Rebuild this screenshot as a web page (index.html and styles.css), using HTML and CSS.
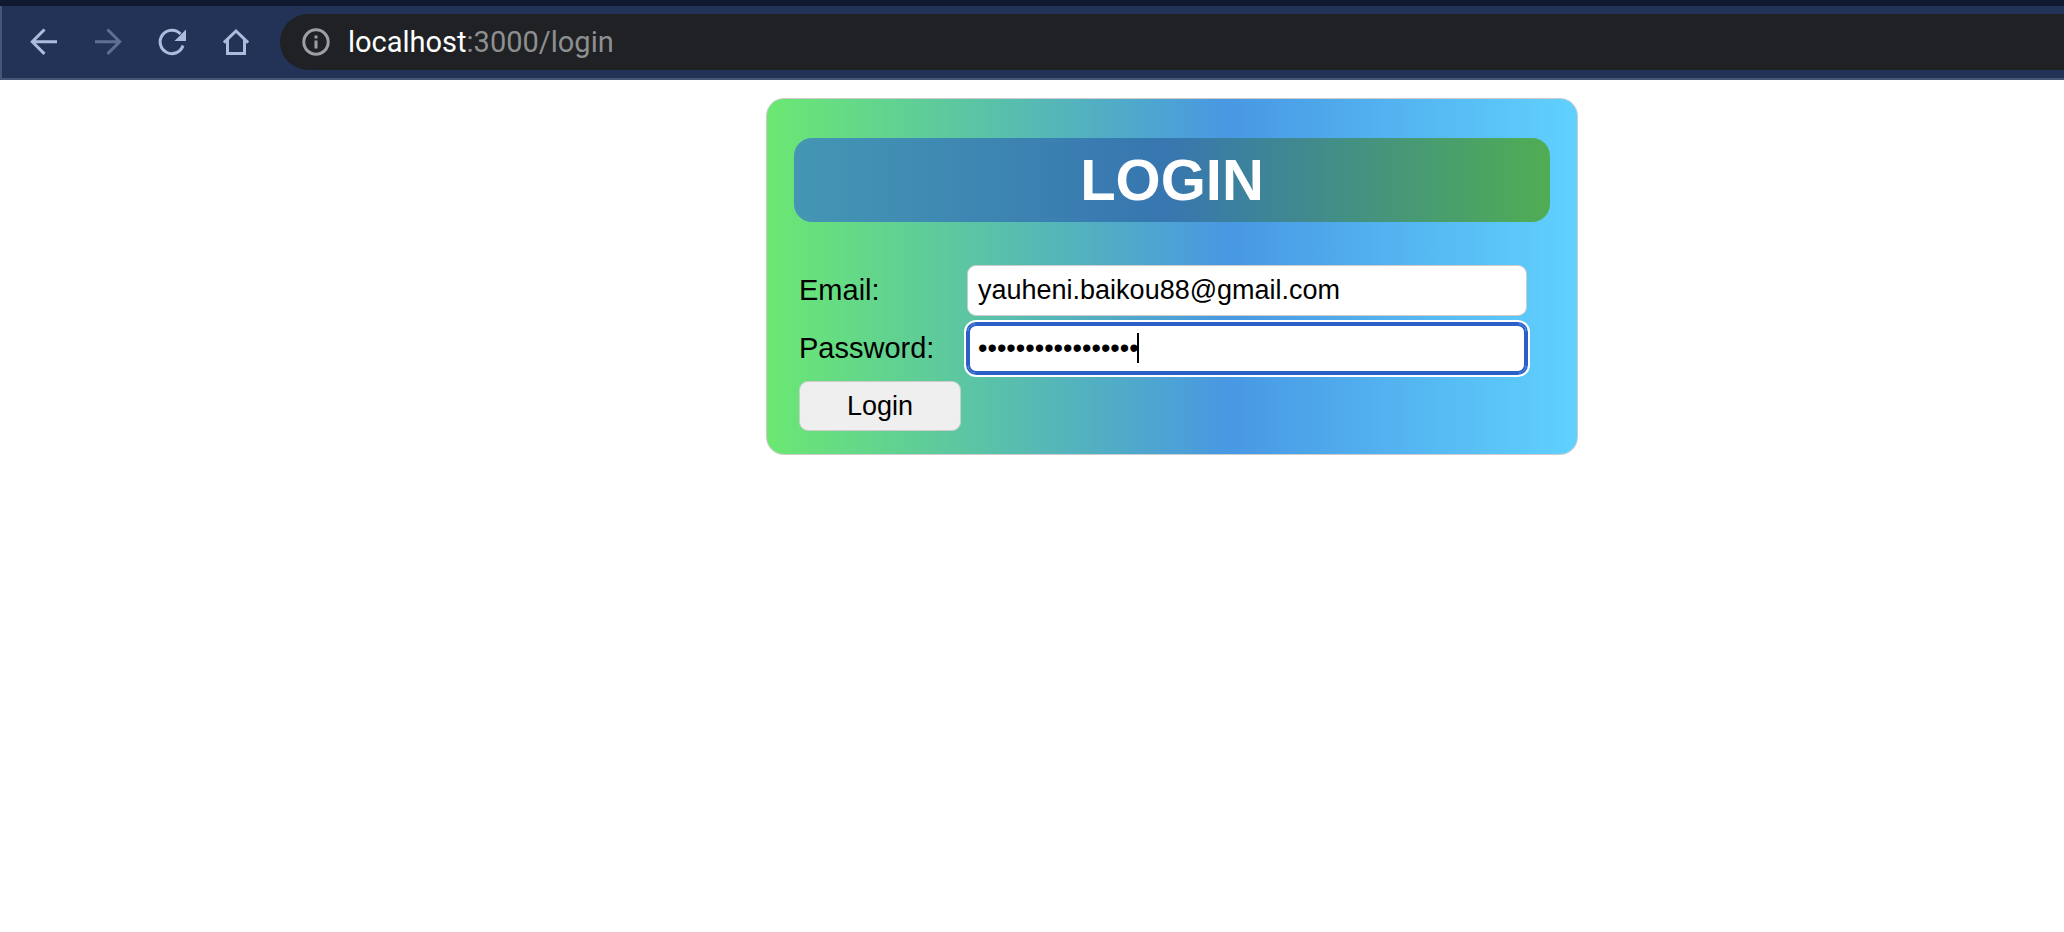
FILE: index.html
```html
<!DOCTYPE html>
<html lang="en">
<head>
  <meta charset="utf-8">
  <title>Login</title>
  <link rel="stylesheet" href="styles.css">
</head>
<body>
  <header class="browser">
    <nav class="browser-nav" aria-label="Browser">
      <button class="nav-button" type="button" aria-label="Back">
        <svg viewBox="0 0 32 32"><path d="M29 15.700H4M16.500 3.500L4.300 15.700 16.500 27.900"/></svg>
      </button>
      <button class="nav-button nav-button-dim" type="button" aria-label="Forward">
        <svg viewBox="0 0 32 32"><path d="M3 15.700h25M15.500 3.500l12.200 12.200L15.500 27.900"/></svg>
      </button>
      <button class="nav-button" type="button" aria-label="Reload">
        <svg viewBox="0 0 32 32"><path d="M27 19.500A11.700 11.700 0 1 1 24.500 8"/><path class="solid" d="M30 3.500V15H18.500z"/></svg>
      </button>
      <button class="nav-button" type="button" aria-label="Home">
        <svg viewBox="0 0 32 32"><path d="M3.900 16.700L16 5l12.100 11.700M7.500 14v13.500h17V14"/></svg>
      </button>
    </nav>
    <div class="address">
      <svg class="address-icon" viewBox="0 0 28 28"><circle cx="14" cy="14" r="12.200"/><path class="solid" d="M12.500 7.500h3v3h-3zM12.500 12.500h3v8h-3z"/></svg>
      <span class="address-text"><span class="address-host">localhost</span>:3000/login</span>
    </div>
  </header>
  <main class="page">
    <form class="card">
      <h1 class="card-title">LOGIN</h1>
      <div class="fields">
        <label class="label" for="email">Email:</label>
        <input class="field" id="email" type="email" value="yauheni.baikou88@gmail.com">
        <label class="label" for="password">Password:</label>
        <div class="active-field">
          <input class="field field-active" id="password" type="password" value="aaaaaaaaaaaaaaaaa">
          <span class="caret"></span>
        </div>
        <button class="submit" type="button">Login</button>
      </div>
    </form>
  </main>
</body>
</html>
```
FILE: styles.css
```css
* {
  box-sizing: border-box;
}

body {
  margin: 0;
  background: #fff;
  color: #000;
  font-family: "Liberation Sans", Arial, sans-serif;
}

.browser {
  display: flex;
  align-items: center;
  gap: 20px;
  height: 80px;
  padding-left: 26px;
  border-top: 6px solid #0f1a30;
  border-bottom: 2px solid #455777;
  background: linear-gradient(to right, #455777 2px, #223357 2px);
}

.browser-nav {
  display: flex;
  gap: 28px;
  padding-right: 6px;
}

.nav-button {
  width: 36px;
  height: 36px;
  padding: 2px;
  border: 0;
  background: none;
  color: #abbddd;
}

.nav-button-dim {
  color: #5d7092;
}

.nav-button svg,
.address-icon {
  display: block;
  fill: none;
  stroke: currentColor;
  stroke-width: 3;
}

.nav-button svg {
  width: 32px;
  height: 32px;
}

.browser .solid {
  fill: currentColor;
  stroke: none;
}

.address {
  display: flex;
  flex: 1;
  align-items: center;
  gap: 18px;
  height: 56px;
  padding-left: 22px;
  border-radius: 28px 0 0 28px;
  background: #202124;
  color: #8e8f91;
  font-family: Roboto, sans-serif;
  font-size: 29px;
}

.address-icon {
  width: 28px;
  height: 28px;
  color: #9aa0a6;
}

.address-host {
  color: #fff;
}

.page {
  display: grid;
  grid-template-columns: 766fr 812fr 486fr;
  padding-top: 18px;
}

.card {
  grid-column: 2;
  padding: 39px 27px 23px;
  border: 1px solid #ccc;
  border-radius: 18px;
  background: linear-gradient(90deg, #6be872 0%, #4898e3 57%, #60d1fe 100%);
}

.card-title {
  margin: 0 0 43px;
  border-radius: 18px;
  background: linear-gradient(90deg, #4496b4 0%, #3776b0 49%, #50ad53 100%);
  color: #fff;
  font-size: 58px;
  line-height: 84px;
  text-align: center;
}

.fields {
  display: grid;
  grid-template-columns: 162px 1fr;
  gap: 7px 6px;
  align-items: center;
  padding: 0 23px 0 5px;
}

.label {
  font-size: 29px;
}

.field,
.submit {
  width: 100%;
  height: 51px;
  border: 1px solid #ccc;
  border-radius: 9px;
  font-family: inherit;
  font-size: 27px;
  color: #000;
}

.field {
  display: block;
  padding: 0 10px;
  background: #fff;
}

.active-field {
  position: relative;
}

.field-active {
  outline: 2px solid #fff;
  outline-offset: 1px;
  border-color: #2a60c8;
  box-shadow: 0 0 0 1px #2a60c8, inset 0 0 0 2px #2a60c8;
}

.caret {
  position: absolute;
  top: 10px;
  left: 170px;
  width: 2px;
  height: 30px;
  background: #000;
}

.submit {
  height: 50px;
  padding: 0;
  background: #efefef;
}
```
